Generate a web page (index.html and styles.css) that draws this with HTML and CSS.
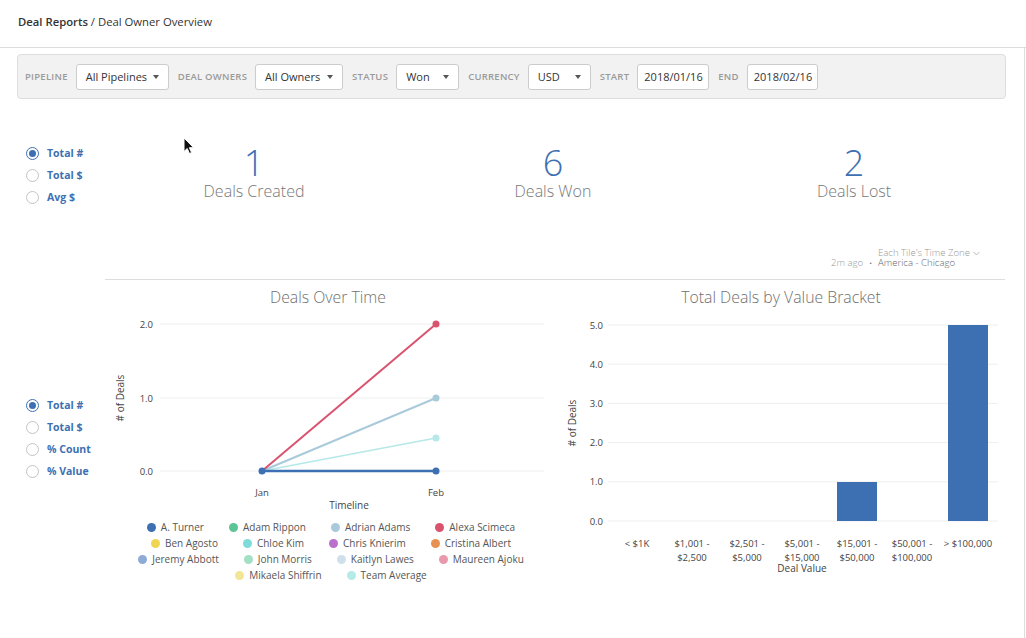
FILE: index.html
```html
<!DOCTYPE html>
<html>
<head>
<meta charset="utf-8">
<link rel="stylesheet" href="styles.css">
</head>
<body>
<div class="header"><span><span class="crumb-root">Deal Reports</span> / Deal Owner Overview</span></div>
<div class="main">
  <div class="filters">
    <span class="flabel">Pipeline</span>
    <div class="select w-pipe"><span>All Pipelines</span><i class="caret"></i></div>
    <span class="flabel">Deal Owners</span>
    <div class="select w-owner"><span>All Owners</span><i class="caret"></i></div>
    <span class="flabel">Status</span>
    <div class="select w-status"><span>Won</span><i class="caret"></i></div>
    <span class="flabel">Currency</span>
    <div class="select w-cur"><span>USD</span><i class="caret"></i></div>
    <span class="flabel">Start</span>
    <div class="dinput w-start">2018/01/16</div>
    <span class="flabel">End</span>
    <div class="dinput w-end">2018/02/16</div>
  </div>

  <div class="summary">
    <div class="side side-1">
      <div class="radio on"><i class="rc"></i><span>Total #</span></div>
      <div class="radio"><i class="rc"></i><span>Total $</span></div>
      <div class="radio"><i class="rc"></i><span>Avg $</span></div>
    </div>
    <div class="stats">
      <div class="stat"><div class="num">1</div><div class="slabel">Deals Created</div></div>
      <div class="stat"><div class="num">6</div><div class="slabel">Deals Won</div></div>
      <div class="stat"><div class="num">2</div><div class="slabel">Deals Lost</div></div>
    </div>
  </div>

  <div class="tz">
    <span class="ago">2m ago</span><span class="dot">·</span>
    <div class="tzblock">
      <div class="tzsel">Each Tile's Time Zone <svg class="chev" width="7" height="5" viewBox="0 0 7 5"><path d="M0.5 1 L3.5 4 L6.5 1" fill="none" stroke="#aaa" stroke-width="0.8"/></svg></div>
      <div class="tzval">America - Chicago</div>
    </div>
  </div>

  <div class="divider"></div>

  <div class="charts">
    <div class="side side-2">
      <div class="radio on"><i class="rc"></i><span>Total #</span></div>
      <div class="radio"><i class="rc"></i><span>Total $</span></div>
      <div class="radio"><i class="rc"></i><span>% Count</span></div>
      <div class="radio"><i class="rc"></i><span>% Value</span></div>
    </div>

    <div class="chart">
      <svg class="csvg" width="450" height="239" viewBox="0 0 450 239">
        <text class="ctitle" x="223" y="22.5" text-anchor="middle">Deals Over Time</text>
        <g class="grid">
          <line x1="55" x2="439" y1="44" y2="44"/>
          <line x1="55" x2="439" y1="118" y2="118"/>
          <line x1="55" x2="439" y1="191" y2="191"/>
        </g>
        <g class="tick" text-anchor="end">
          <text x="48" y="47.5">2.0</text>
          <text x="48" y="121.5">1.0</text>
          <text x="48" y="194.5">0.0</text>
        </g>
        <g class="tick" text-anchor="middle">
          <text x="157" y="216">Jan</text>
          <text x="331" y="216">Feb</text>
        </g>
        <text class="atitle" x="244" y="229" text-anchor="middle">Timeline</text>
        <text class="atitle" transform="translate(18.5,118) rotate(-90)" text-anchor="middle"># of Deals</text>
        <line x1="157" y1="191" x2="331" y2="158" stroke="#b6e8e8" stroke-width="1.5"/>
        <line x1="157" y1="191" x2="331" y2="118" stroke="#a9cadb" stroke-width="2"/>
        <line x1="157" y1="191" x2="331" y2="44" stroke="#d9536f" stroke-width="2"/>
        <line x1="157" y1="191" x2="331" y2="191" stroke="#3d70b2" stroke-width="2.5"/>
        <circle cx="331" cy="158" r="3.5" fill="#b6e8e8"/>
        <circle cx="331" cy="118" r="3.5" fill="#a9cadb"/>
        <circle cx="331" cy="44" r="3.5" fill="#d9536f"/>
        <circle cx="331" cy="191" r="3.5" fill="#3d70b2"/>
        <circle cx="157" cy="191" r="3.5" fill="#3d70b2"/>
      </svg>
      <div class="legend">
        <div class="lrow">
          <span class="li"><i style="background:#3d70b2"></i>A. Turner</span>
          <span class="li"><i style="background:#5cc595"></i>Adam Rippon</span>
          <span class="li"><i style="background:#a9cadb"></i>Adrian Adams</span>
          <span class="li"><i style="background:#d9536f"></i>Alexa Scimeca</span>
        </div>
        <div class="lrow">
          <span class="li"><i style="background:#f0d553"></i>Ben Agosto</span>
          <span class="li"><i style="background:#7fdbd9"></i>Chloe Kim</span>
          <span class="li"><i style="background:#bb6fcc"></i>Chris Knierim</span>
          <span class="li"><i style="background:#e89150"></i>Cristina Albert</span>
        </div>
        <div class="lrow">
          <span class="li"><i style="background:#8eaad6"></i>Jeremy Abbott</span>
          <span class="li"><i style="background:#a3dfc4"></i>John Morris</span>
          <span class="li"><i style="background:#cfe0ec"></i>Kaitlyn Lawes</span>
          <span class="li"><i style="background:#e999ab"></i>Maureen Ajoku</span>
        </div>
        <div class="lrow">
          <span class="li"><i style="background:#f3e596"></i>Mikaela Shiffrin</span>
          <span class="li"><i style="background:#b6eae6"></i>Team Average</span>
        </div>
      </div>
    </div>

    <div class="chart">
      <svg class="csvg" width="450" height="300" viewBox="0 0 450 300">
        <text class="ctitle" x="226" y="22.5" text-anchor="middle">Total Deals by Value Bracket</text>
        <g class="grid">
          <line x1="53" x2="443" y1="45" y2="45"/>
          <line x1="53" x2="443" y1="84.2" y2="84.2"/>
          <line x1="53" x2="443" y1="123.4" y2="123.4"/>
          <line x1="53" x2="443" y1="162.6" y2="162.6"/>
          <line x1="53" x2="443" y1="201.8" y2="201.8"/>
          <line x1="53" x2="443" y1="241" y2="241"/>
        </g>
        <g class="tick" text-anchor="end">
          <text x="48" y="48.5">5.0</text>
          <text x="48" y="87.7">4.0</text>
          <text x="48" y="126.9">3.0</text>
          <text x="48" y="166.1">2.0</text>
          <text x="48" y="205.3">1.0</text>
          <text x="48" y="244.5">0.0</text>
        </g>
        <text class="atitle" transform="translate(20.5,143) rotate(-90)" text-anchor="middle"># of Deals</text>
        <rect x="282" y="202" width="40" height="39" fill="#3d70b2"/>
        <rect x="393" y="45" width="40" height="196" fill="#3d70b2"/>
        <g class="tick" text-anchor="middle">
          <text x="82" y="267">&lt; $1K</text>
          <text x="137" y="267">$1,001 -</text>
          <text x="137" y="281">$2,500</text>
          <text x="192" y="267">$2,501 -</text>
          <text x="192" y="281">$5,000</text>
          <text x="247" y="267">$5,001 -</text>
          <text x="247" y="281">$15,000</text>
          <text x="302" y="267">$15,001 -</text>
          <text x="302" y="281">$50,000</text>
          <text x="357" y="267">$50,001 -</text>
          <text x="357" y="281">$100,000</text>
          <text x="413" y="267">&gt; $100,000</text>
        </g>
        <text class="atitle" x="247" y="291.5" text-anchor="middle">Deal Value</text>
      </svg>
    </div>
  </div>
</div>

<svg class="cursor" width="12" height="18" viewBox="0 0 12 18">
  <path d="M1 1 L1 14.5 L4.2 11.5 L6.5 16.5 L8.6 15.6 L6.4 10.7 L10.6 10.7 Z" fill="#111" stroke="#fff" stroke-width="1"/>
</svg>
</body>
</html>
```

FILE: styles.css
```css
* { box-sizing: border-box; }
html, body { margin: 0; padding: 0; background: #fff; }
body {
  font-family: "Open Sans", "Liberation Sans", Arial, sans-serif;
  color: #333;
  width: 1026px;
  height: 638px;
  overflow: hidden;
  position: relative;
}

.header {
  height: 48px;
  border-bottom: 1px solid #ddd;
  padding-left: 18px;
  display: flex;
  align-items: center;
  font-size: 11.3px;
  color: #333;
  padding-bottom: 4px;
}
.crumb-root { font-weight: 600; }

.main {
  width: 1025px;
  height: 590px;
  border-right: 1px solid #ddd;
  padding-top: 6px;
}

.filters {
  margin: 0 18px 0 17px;
  height: 45px;
  background: #f2f2f2;
  border: 1px solid #ddd;
  border-radius: 4px;
  display: flex;
  align-items: center;
  padding-left: 7px;
  gap: 8px;
}
.flabel {
  font-size: 9.5px;
  font-weight: 600;
  text-transform: uppercase;
  color: #9a9a9a;
  letter-spacing: 0.25px;
}
.select + .flabel, .dinput + .flabel { margin-left: 1px; }
.select, .dinput {
  height: 26px;
  background: #fff;
  border: 1px solid #ccc;
  border-radius: 3px;
  font-size: 11px;
  color: #333;
  display: flex;
  align-items: center;
}
.select { justify-content: space-between; padding: 0 9px 0 9px; }
.dinput { padding: 0 6px; }
.w-pipe { width: 93px; }
.w-owner { width: 88px; }
.w-status { width: 63px; }
.w-cur { width: 63px; }
.w-start { width: 72px; }
.w-end { width: 71px; }
.caret {
  width: 0; height: 0;
  border-left: 3.5px solid transparent;
  border-right: 3.5px solid transparent;
  border-top: 4px solid #555;
}

.summary { display: flex; height: 149px; }
.side { width: 105px; padding-left: 26px; }
.side-1 { padding-top: 43px; }
.side-2 { padding-top: 114px; }
.radio {
  height: 22px;
  display: flex;
  align-items: center;
  gap: 8px;
  font-size: 10.5px;
  font-weight: 700;
  color: #3d70b2;
}
.rc {
  width: 13px; height: 13px;
  border-radius: 50%;
  border: 1px solid #c4c4c4;
  background: #fff;
  position: relative;
  flex: none;
}
.radio.on .rc { border-color: #3d70b2; }
.radio.on .rc::after {
  content: "";
  position: absolute;
  left: 2px; top: 2px;
  width: 7px; height: 7px;
  border-radius: 50%;
  background: #3d70b2;
}

.stats {
  width: 900px;
  display: grid;
  grid-template-columns: 298px 300px 302px;
  padding-top: 44px;
}
.stat { text-align: center; }
.num {
  font-size: 36px;
  line-height: 40px;
  font-weight: 300;
  color: #3d70b2;
}
.slabel {
  font-size: 16px;
  line-height: 20px;
  font-weight: 300;
  color: #777;
  margin-top: -2px;
}

.tz {
  height: 20px;
  display: flex;
  justify-content: flex-end;
  align-items: flex-end;
  padding-right: 44px;
  font-size: 9.6px;
  line-height: 10px;
  color: #999;
  font-weight: 300;
}
.tzblock { display: flex; flex-direction: column; }
.tzsel { display: flex; align-items: center; gap: 2px; }
.chev { margin-left: 1px; }
.tzval { color: #666; }
.ago { margin-right: 6px; }
.dot { margin-right: 6px; color: #777; font-weight: 700; }

.divider {
  margin-top: 11px;
  margin-left: 105px;
  width: 900px;
  height: 1px;
  background: #ddd;
}

.charts { display: flex; }
.chart { width: 450px; }
.csvg { display: block; }
.ctitle { font-size: 15.8px; font-weight: 300; fill: #6f6f6f; }
.grid line { stroke: #eeeeee; stroke-width: 1; }
.tick text, .tick { font-size: 9.5px; fill: #444; }
.atitle { font-size: 10px; fill: #444; }

.legend { padding-top: 0; }
.lrow {
  display: flex;
  justify-content: center;
  gap: 25px;
  height: 16px;
  align-items: center;
  padding-left: 2px;
}
.li {
  display: flex;
  align-items: center;
  gap: 5px;
  font-size: 10px;
  color: #555;
}
.li i {
  width: 9px; height: 9px;
  border-radius: 50%;
  display: block;
}

.cursor {
  position: absolute;
  left: 183px;
  top: 137px;
}
```
